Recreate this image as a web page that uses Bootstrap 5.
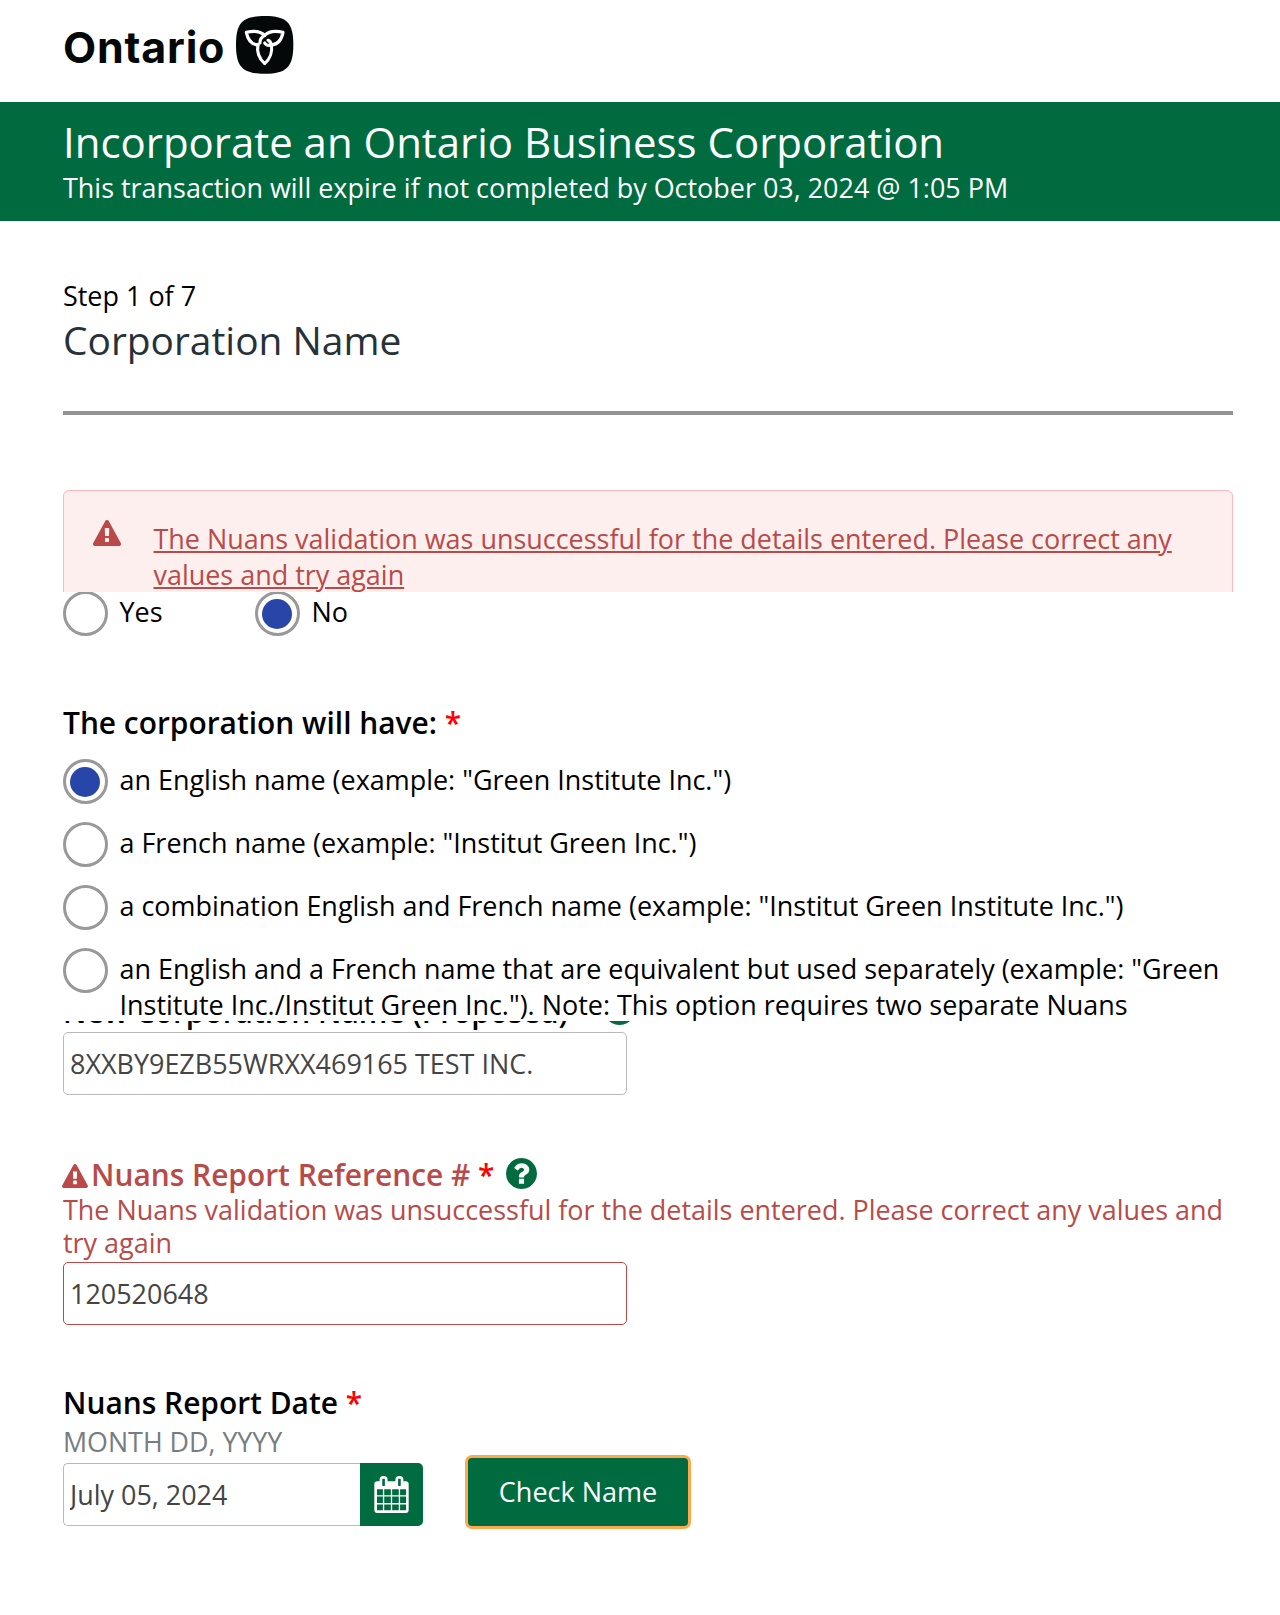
<!DOCTYPE html>
<html lang="en">
<head>
<meta charset="utf-8">
<meta name="viewport" content="width=device-width, initial-scale=1">
<title>Incorporate an Ontario Business Corporation</title>
<link href="https://cdn.jsdelivr.net/npm/bootstrap@5.3.0/dist/css/bootstrap.min.css" rel="stylesheet">
<style>
  :root { --ont-green: #006b3f; --ont-red: #b94a48; }
  body { font-family: "Open Sans", sans-serif; font-size: 26.950px; line-height: 36px; color: #000; background: #fff; min-height: 1615px; }
  svg { display: block; flex: none; }
  .page-x { padding-left: 63px; padding-right: 47px; }
  .site-head { height: 102px; padding-top: 15px; }
  .wordmark { font-family: Inter, sans-serif; font-weight: 700; font-size: 43px; line-height: 64px; letter-spacing: .8px; color: #050808; width: 171.500px; white-space: nowrap; }
  .title-bar { height: 119px; background: var(--ont-green); padding-top: 17px; }
  .title-bar h1 { font-size: 41.950px; line-height: 46px; font-weight: 400; margin: 0; }
  .title-bar p { line-height: 45px; margin: 0; }
  .step-head { height: 194px; padding-top: 57px; border-bottom: 4px solid #929492; }
  .step-head h2 { font-size: 38.900px; line-height: 52px; color: #263238; font-weight: 400; margin: 0; }
  .alert-clip { height: 177px; padding-top: 75px; overflow: hidden; }
  .error-box { height: 160px; border: 1px solid #ffb6c1; border-radius: 6px; background: #fdefee; color: var(--ont-red); padding: 29px 40px 0 29px; gap: 32.500px; }
  .error-box a { color: inherit; text-decoration: underline; text-decoration-thickness: 2px; text-underline-offset: 2px; padding-top: 1px; }
  .yesno { height: 45px; margin-top: -1px; clip-path: inset(1px 0 0 0); }
  .yesno .opt:first-child { width: 192px; }
  .dial { width: 45px; height: 45px; border: 3px solid #999; border-radius: 50%; background: #fff; flex: none; display: flex; align-items: center; justify-content: center; }
  .dial.on::after { content: ""; width: 30px; height: 30px; border-radius: 50%; background: #2746a8; margin-right: 1px; }
  .opt { gap: 11.500px; align-items: flex-start; display: flex; }
  .opt > span:last-child { padding-top: 3px; }
  .opt-list { height: 262px; overflow: hidden; margin-top: 16px; }
  .opt-list .opt { height: 63px; flex: none; }
  .fld-label { font-weight: 600; font-size: 29.900px; line-height: 40px; }
  .have-label { margin-top: 67px; }
  .ref-label { margin-top: 60px; line-height: 38px; height: 38px; color: var(--ont-red); }
  .ref-label > span { padding-top: 2px; }
  .ref-error { color: var(--ont-red); line-height: 33px; margin-bottom: 3px; }
  .date-label { margin-top: 58px; }
  .date-hint { color: #767d80; font-size: 26.800px; line-height: 38px; margin-bottom: 2px; }
  .req { color: #f00; }
  .fld, .fld:focus { height: 63px; width: 564px; border: 1px solid #b9b9b9; border-radius: 5px; padding: 0 6px; font-size: 26.950px; color: #444; background: #fff; box-shadow: none; }
  .fld.err-fld { border-color: var(--ont-red); }
  .fld.date-fld { width: 297px; border-right: 0; border-radius: 5px 0 0 5px; }
  .label-clip { height: 11px; overflow: hidden; }
  .label-clip svg { margin: 0 0 7px 12px; }
  .cal-btn { width: 63px; height: 63px; background: var(--ont-green); border: 0; border-radius: 0 5px 5px 0; padding: 0; }
  .check-btn { width: 226px; height: 74px; background: var(--ont-green); border: 3px solid #ffa94d; border-radius: 7px; color: #fff; font-size: 27px; line-height: 36px; padding: 0 0 1px; margin: -8px 0 0 42px; }
</style>
<script src="https://cdn.jsdelivr.net/npm/bootstrap@5.3.0/dist/js/bootstrap.bundle.min.js"></script>
</head>
<body>
<svg width="0" height="0" class="position-absolute" aria-hidden="true">
  <symbol id="i-warn" viewBox="0 0 1792 1664"><path d="M1024 1375v-190q0-14-9.500-23.500t-22.500-9.500h-192q-13 0-22.500 9.500t-9.500 23.500v190q0 14 9.500 23.500t22.500 9.500h192q13 0 22.500-9.500t9.500-23.500zM1022 1001l18-459q0-12-10-19q-13-11-24-11h-220q-11 0-24 11q-10 7-10 21l17 457q0 10 10 16.500t24 6.500h185q14 0 23.500-6.500t10.500-16.500zM1008 67l768 1408q35 63-2 126q-17 29-46.500 46t-63.500 17h-1536q-34 0-63.500-17t-46.500-46q-37-63-2-126l768-1408q17-31 47-49t65-18 65 18 47 49z" fill="#b94a48" fill-rule="evenodd"/></symbol>
  <symbol id="i-help" viewBox="128 128 1536 1536"><path d="M1024 1376v-192q0-14-9-23t-23-9h-192q-14 0-23 9t-9 23v192q0 14 9 23t23 9h192q14 0 23-9t9-23zM1280 704q0-88-55.500-163t-138.500-116t-170-41q-243 0-371 213q-15 24 8 42l132 100q7 6 19 6q16 0 25-12q53-68 86-92q34-24 86-24q48 0 85.500 26t37.500 59q0 38-20 61t-68 45q-63 28-115.500 86.500t-52.500 125.500v36q0 14 9 23t23 9h192q14 0 23-9t9-23q0-19 21.500-49.500t54.500-49.500q32-18 49-28.500t46-35t44.500-48t28-60.500t12.500-81zM1664 896q0 209-103 385.500t-279.500 279.500t-385.500 103t-385.500-103t-279.500-279.500t-103-385.500t103-385.500t279.500-279.500t385.500-103t385.500 103t279.500 279.500t103 385.500z" fill="#006b3f" fill-rule="evenodd"/></symbol>
</svg>
<header class="site-head page-x d-flex align-items-start">
  <span class="wordmark">Ontario</span>
  <svg width="60" height="60" viewBox="583 44 180 180"><path d="M672 47C738 47 758 67 758 133S738 220 672 220 586 200 586 133 606 47 672 47Z" fill="#050808"/><g fill="none" stroke="#fff" stroke-width="9.500" stroke-linejoin="round" stroke-linecap="round"><path d="M672 105C658 91 637 91 617 96C621 117 632 132 652 134"/><path d="M658 128C657 117 663 110 672 105C686 91 707 91 727 96C723 117 712 132 692 134C684 136 676 135 672 128"/><path d="M652 132C648 154 656 176 672 190C688 176 696 154 692 134C691 128 688 122 682 120"/></g></svg>
</header>
<section class="title-bar page-x text-white">
  <h1>Incorporate an Ontario Business Corporation</h1>
  <p>This transaction will expire if not completed by October 03, 2024 @ 1:05 PM</p>
</section>
<main class="page-x">
  <div class="step-head">
    <div>Step 1 of 7</div>
    <h2>Corporation Name</h2>
  </div>
  <div class="alert-clip">
    <div class="error-box d-flex" role="alert">
      <svg width="28" height="26"><use href="#i-warn"/></svg>
      <a href="#ref">The Nuans validation was unsuccessful for the details entered. Please correct any<br>values and try again</a>
    </div>
  </div>
  <div class="yesno d-flex">
    <div class="opt"><span class="dial"></span><span>Yes</span></div>
    <div class="opt"><span class="dial on"></span><span>No</span></div>
  </div>
  <div class="fld-label have-label">The corporation will have: <span class="req">*</span></div>
  <div class="opt-list d-flex flex-column">
    <div class="opt"><span class="dial on"></span><span>an English name (example: "Green Institute Inc.")</span></div>
    <div class="opt"><span class="dial"></span><span>a French name (example: "Institut Green Inc.")</span></div>
    <div class="opt"><span class="dial"></span><span>a combination English and French name (example: "Institut Green Institute Inc.")</span></div>
    <div class="opt"><span class="dial"></span><span>an English and a French name that are equivalent but used separately (example: "Green<br>Institute Inc./Institut Green Inc."). Note: This option requires two separate Nuans</span></div>
  </div>
  <div class="label-clip d-flex align-items-end">
    <div class="fld-label">New Corporation Name (Proposed) <span class="req">*</span></div>
    <svg width="31" height="31"><use href="#i-help"/></svg>
  </div>
  <input class="fld form-control" value="8XXBY9EZB55WRXX469165 TEST INC.">
  <div class="fld-label ref-label d-flex align-items-center">
    <svg class="mt-1" style="margin-left:-1px;margin-right:3px" width="26" height="24"><use href="#i-warn"/></svg>
    <span>Nuans Report Reference # <span class="req">*</span></span>
    <svg style="margin-left:12px;margin-top:-1px" width="31" height="31"><use href="#i-help"/></svg>
  </div>
  <div class="ref-error">The Nuans validation was unsuccessful for the details entered. Please correct any values and<br>try again</div>
  <input id="ref" class="fld err-fld form-control" value="120520648">
  <div class="fld-label date-label">Nuans Report Date <span class="req">*</span></div>
  <div class="date-hint">MONTH DD, YYYY</div>
  <div class="d-flex align-items-start">
    <input class="fld date-fld form-control flex-grow-0" value="July 05, 2024">
    <button class="cal-btn btn d-flex align-items-center justify-content-center" aria-label="Choose date">
      <svg width="35" height="37" viewBox="64 0 1664 1792"><path fill="#fff" fill-rule="evenodd" d="M192 1664h288v-288h-288v288zm352 0h320v-288h-320v288zm-352-352h288v-320h-288v320zm352 0h320v-320h-320v320zm-352-384h288v-288h-288v288zm736 736h320v-288h-320v288zm-384-736h320v-288h-320v288zm768 736h288v-288h-288v288zm-384-352h320v-320h-320v320zm-352-864v-288q0-13-9.500-22.500t-22.500-9.500h-64q-13 0-22.500 9.500t-9.500 22.500v288q0 13 9.500 22.500t22.500 9.500h64q13 0 22.500-9.500t9.500-22.500zm736 864h288v-320h-288v320zm-384-384h320v-288h-320v288zm384 0h288v-288h-288v288zm32-480v-288q0-13-9.500-22.500t-22.500-9.500h-64q-13 0-22.500 9.500t-9.500 22.500v288q0 13 9.500 22.500t22.500 9.500h64q13 0 22.500-9.500t9.500-22.500zm384-64v1280q0 52-38 90t-90 38h-1408q-52 0-90-38t-38-90v-1280q0-52 38-90t90-38h128v-96q0-66 47-113t113-47h64q66 0 113 47t47 113v96h384v-96q0-66 47-113t113-47h64q66 0 113 47t47 113v96h128q52 0 90 38t38 90z"/></svg>
    </button>
    <button class="check-btn btn">Check Name</button>
  </div>
</main>
</body>
</html>
